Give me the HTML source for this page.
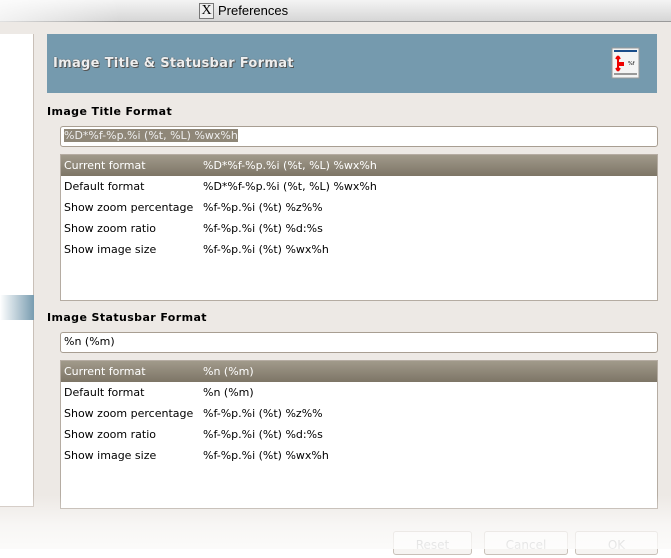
<!DOCTYPE html>
<html><head><style>
body{margin:0;width:671px;height:549px;overflow:hidden;background:#fff;font-family:"DejaVu Sans",sans-serif;font-size:11px;color:#000;position:relative}
.abs{position:absolute}
#win{left:0;top:0;width:671px;height:549px;background:#ede9e5}
#tb{left:0;top:0;width:671px;height:21px;background:linear-gradient(#f4f4f4,#d6d6d6);border-bottom:1px solid #9a9a9a}
#tb span{position:absolute;left:218px;top:3px;font-size:13px;font-family:"Liberation Sans",sans-serif}
#xi{left:199px;top:3px;width:13px;height:14px;border:1px solid #777;background:#eee;font-family:"Liberation Serif",serif;font-size:14px;line-height:14px;text-align:center}
#side{left:0;top:34px;width:33px;height:472px;background:#fff;border-right:1px solid #c9c0b8;border-bottom:1px solid #c9c0b8}
#sel{left:0;top:295px;width:34px;height:25px;background:linear-gradient(90deg,#fff,#789cb0)}
#ban{left:47px;top:34px;width:610px;height:59px;background:#759aae}
#ban b{position:absolute;left:6px;top:22px;font-size:13px;color:#eee;text-shadow:1px 1px 0 #555,0 0 1px #333;letter-spacing:.3px}
.lbl{font-weight:bold;font-size:11px;left:47px;letter-spacing:.4px}
.ent{left:60px;width:596px;height:19px;background:#fff;border:1px solid #a89e92;border-radius:3px}
.ent span{position:absolute;left:3px;top:2px}
.list{left:60px;width:596px;background:#fff;border:1px solid #b5aca2}
.row{position:relative;height:21px;line-height:21px}
.row span{position:absolute;left:3px}
.row i{position:absolute;left:142px;font-style:normal}
.hd{background:linear-gradient(#a19a8b,#7d7566);color:#fff}
#fade{left:0;top:0;width:671px;height:549px;background:linear-gradient(180deg,rgba(255,255,255,0) 495px,rgba(255,255,255,.6) 525px,rgba(255,255,255,.8) 549px)}
#lfade{left:0;top:0;width:120px;height:22px;background:linear-gradient(90deg,rgba(255,255,255,.7),rgba(255,255,255,0))}
.btn{top:531px;height:22px;border:1px solid #c8c0b8;border-radius:3px;background:#f6f4f2;color:#999;font-size:12px;text-align:center;line-height:26px}
</style></head><body>
<div id="win" class="abs"></div>
<div id="tb" class="abs"><span>Preferences</span></div>
<div id="xi" class="abs">X</div>
<div id="side" class="abs"></div>
<div id="sel" class="abs"></div>
<div id="ban" class="abs"><b>Image Title &amp; Statusbar Format</b>
<svg class="abs" style="left:564px;top:13px" width="30" height="34"><rect x="1" y="1" width="27" height="30" fill="#f4f4f4" stroke="#999"/><rect x="3" y="3" width="23" height="2" fill="#1a4d8a"/><path d="M7 9v7h6M7 9l-2 3M7 9l2 3M7 24v-6h6M7 24l-2-3M7 24l2-3" stroke="#e00" stroke-width="2" fill="none"/><text x="17" y="18" font-size="5">%f</text><rect x="3" y="26" width="23" height="2" fill="#999"/></svg></div>
<div class="abs lbl" style="top:105px">Image Title Format</div>
<div class="abs ent" style="top:126px"><span style="background:#8f8778;color:#eee">%D*%f-%p.%i (%t, %L) %wx%h</span></div>
<div class="abs list" style="top:154px;height:145px">
<div class="row hd"><span>Current format</span><i>%D*%f-%p.%i (%t, %L) %wx%h</i></div>
<div class="row"><span>Default format</span><i>%D*%f-%p.%i (%t, %L) %wx%h</i></div>
<div class="row"><span>Show zoom percentage</span><i>%f-%p.%i (%t) %z%%</i></div>
<div class="row"><span>Show zoom ratio</span><i>%f-%p.%i (%t) %d:%s</i></div>
<div class="row"><span>Show image size</span><i>%f-%p.%i (%t) %wx%h</i></div>
</div>
<div class="abs lbl" style="top:311px">Image Statusbar Format</div>
<div class="abs ent" style="top:332px"><span>%n (%m)</span></div>
<div class="abs list" style="top:360px;height:147px">
<div class="row hd"><span>Current format</span><i>%n (%m)</i></div>
<div class="row"><span>Default format</span><i>%n (%m)</i></div>
<div class="row"><span>Show zoom percentage</span><i>%f-%p.%i (%t) %z%%</i></div>
<div class="row"><span>Show zoom ratio</span><i>%f-%p.%i (%t) %d:%s</i></div>
<div class="row"><span>Show image size</span><i>%f-%p.%i (%t) %wx%h</i></div>
</div>
<div class="abs btn" style="left:393px;width:77px">Reset</div>
<div class="abs btn" style="left:484px;width:82px">Cancel</div>
<div class="abs btn" style="left:575px;width:81px">OK</div>
<div id="fade" class="abs"></div>
<div id="lfade" class="abs"></div>
</body></html>
